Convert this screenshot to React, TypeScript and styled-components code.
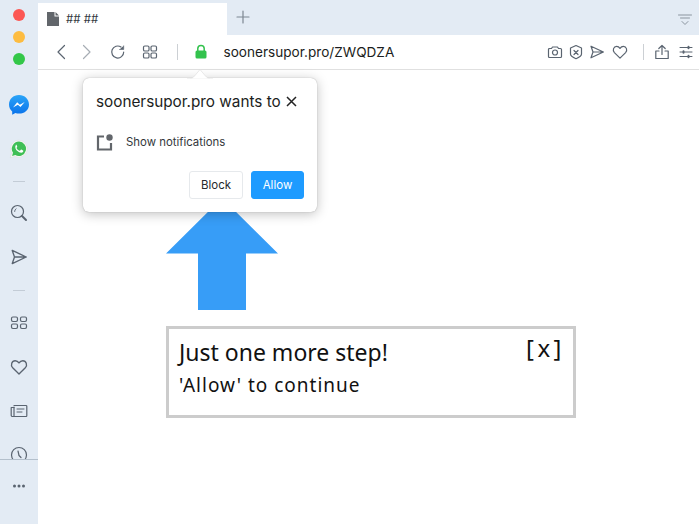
import styled, { createGlobalStyle } from 'styled-components'

const GlobalStyle = createGlobalStyle`
    html, body {
        margin: 0;
        padding: 0;
        background: #fff;
        font-family: Inter, "Liberation Sans", sans-serif;
    }
`

const Window = styled.div`
    position: relative;
    display: flex;
    width: 699px;
    height: 524px;
    overflow: hidden;
`

const Sidebar = styled.aside`
    position: relative;
    display: flex;
    flex-direction: column;
    align-items: center;
    flex: 0 0 38px;
    height: 524px;
    overflow: hidden;
    background: #e3ebf4;
`

const Lights = styled.div`
    display: flex;
    flex-direction: column;
    gap: 10px;
    padding-top: 9px;
    margin-bottom: 18px;
`

const Light = styled.span<{ $color: string }>`
    width: 12px;
    height: 12px;
    border-radius: 50%;
    background: ${p => p.$color};
`

const SideItem = styled.div<{ $height?: number }>`
    display: flex;
    align-items: center;
    justify-content: center;
    flex: 0 0 auto;
    width: 38px;
    height: ${p => p.$height ?? 44}px;
`

const SideRule = styled.span`
    display: block;
    width: 12px;
    height: 1px;
    background: #c3ccd6;
`

const SideFooter = styled.div`
    position: absolute;
    left: 0;
    right: 0;
    top: 459px;
    bottom: 0;
    display: flex;
    justify-content: center;
    padding-top: 19px;
    background: #e3ebf4;
    border-top: 1px solid #b4c0cc;
`

const Main = styled.div`
    display: flex;
    flex-direction: column;
    flex: 1;
    min-width: 0;
`

const TabStrip = styled.div`
    display: flex;
    align-items: flex-end;
    height: 35px;
    background: #e3ebf4;
`

const Tab = styled.div`
    display: flex;
    align-items: center;
    gap: 7px;
    box-sizing: border-box;
    width: 189px;
    height: 32px;
    padding-left: 9px;
    background: #fff;
    font-size: 11.5px;
    color: #333a42;
`

const NewTab = styled.div`
    display: flex;
    align-items: center;
    justify-content: center;
    align-self: flex-start;
    width: 32px;
    height: 34px;
`

const TabMenu = styled.div`
    display: flex;
    align-self: center;
    margin: 4px 7px 0 auto;
`

const Toolbar = styled.div`
    display: flex;
    align-items: center;
    box-sizing: border-box;
    height: 35px;
    padding: 0 6px 1px 17px;
    background: #fff;
    border-bottom: 1px solid #e0e0e0;
`

const ToolGroup = styled.div<{ $gap: number; $left?: number }>`
    display: flex;
    align-items: center;
    gap: ${p => p.$gap}px;
    margin-left: ${p => p.$left ?? 0}px;
`

const ToolDivider = styled.span<{ $margin: string }>`
    width: 1px;
    height: 16px;
    margin: ${p => p.$margin};
    background: #ccd0d4;
`

const Url = styled.span`
    margin-left: 16px;
    font-size: 13.6px;
    color: #1b1d20;
`

const ToolEnd = styled.div`
    display: flex;
    align-items: center;
    margin-left: auto;
`

const Page = styled.main`
    flex: 1;
    display: flex;
    flex-direction: column;
    padding: 128px 0 0 128px;
    background: #fff;
`

const Arrow = styled.svg`
    display: block;
    width: 112px;
    height: 112px;
    margin-bottom: 16px;
`

const Notice = styled.section`
    position: relative;
    box-sizing: border-box;
    width: 410px;
    height: 92px;
    padding: 8px 9px 0 10px;
    border: 3px solid #cccccc;
    font-family: "Noto Sans", sans-serif;
    color: #111;
`

const NoticeTitle = styled.h1`
    margin: 0;
    font-size: 23px;
    font-weight: 400;
    line-height: 30px;
`

const NoticeText = styled.p`
    margin: 5px 0 0;
    font-size: 19px;
    line-height: 26px;
    letter-spacing: 1px;
`

const NoticeClose = styled.span`
    position: absolute;
    top: 2px;
    right: 8px;
    font-size: 24px;
    line-height: 34px;
    letter-spacing: 3.5px;
`

const Popup = styled.div`
    position: absolute;
    left: 83px;
    top: 78px;
    box-sizing: border-box;
    width: 234px;
    height: 134px;
    padding: 0 13px;
    background: #fff;
    border-radius: 6px;
    box-shadow: 0 0 1px rgba(0, 0, 0, 0.35), 0 2px 12px rgba(0, 0, 0, 0.25);
`

const PopupNotch = styled.svg`
    position: absolute;
    left: 104px;
    top: -9px;
    width: 26px;
    height: 10px;
`

const PopupHead = styled.div`
    display: flex;
    align-items: center;
    justify-content: space-between;
    height: 46px;
    padding-top: 1px;
    box-sizing: border-box;
    padding-right: 7px;
`

const PopupTitle = styled.span`
    font-size: 15.3px;
    color: #1c1e21;
`

const Permission = styled.div`
    display: flex;
    align-items: center;
    gap: 13px;
    height: 36px;
    font-size: 11.4px;
    color: #33373b;
`

const PopupActions = styled.div`
    display: flex;
    justify-content: flex-end;
    gap: 8px;
    margin-top: 11px;
`

const PopupButton = styled.button<{ $primary?: boolean }>`
    box-sizing: border-box;
    width: ${p => (p.$primary ? 53 : 54)}px;
    height: 28px;
    padding: 0;
    border-radius: 3px;
    border: 1px solid ${p => (p.$primary ? '#1e9bff' : '#e6e9ec')};
    background: ${p => (p.$primary ? '#1e9bff' : '#fff')};
    color: ${p => (p.$primary ? '#fff' : '#26292c')};
    font-family: inherit;
    font-size: 11.5px;
`

const stroke = '#5a6470'

const Icon = ({ size = 18, width, color = stroke, sw = 1.2, children }: {
    size?: number
    width?: number
    color?: string
    sw?: number
    children: React.ReactNode
}) => (
    <svg
        width={width ?? size}
        height={size}
        viewBox={`0 0 ${width ?? size} ${size}`}
        fill="none"
        stroke={color}
        strokeWidth={sw}
        strokeLinecap="round"
        strokeLinejoin="round"
    >
        {children}
    </svg>
)

const Grid = () => (
    <Icon size={16}>
        <rect x="1.5" y="2" width="5.5" height="5" rx="1.3" />
        <rect x="9" y="2" width="5.5" height="5" rx="1.3" />
        <rect x="1.5" y="9" width="5.5" height="5" rx="1.3" />
        <rect x="9" y="9" width="5.5" height="5" rx="1.3" />
    </Icon>
)

const Heart = ({ size = 16 }: { size?: number }) => (
    <Icon size={size}>
        <g transform={`scale(${size / 16})`}>
            <path d="M8 14.200 2.400 8.600C.2 6.200 1.600 2.400 4.600 2.400c1.500 0 2.600.8 3.400 2 .8-1.200 1.900-2 3.400-2 3 0 4.400 3.800 2.200 6.200L8 14.200Z" />
        </g>
    </Icon>
)

const Send = ({ size = 16 }: { size?: number }) => (
    <Icon size={size}>
        <g transform={`scale(${size / 16})`}>
            <path d="M2 2.200 14.400 8 2 13.800 4 8 2 2.200ZM4 8h10.400" />
        </g>
    </Icon>
)

const Messenger = () => (
    <svg width="22" height="22" viewBox="0 0 22 22">
        <defs>
            <linearGradient id="msg" x1="0.5" y1="0" x2="0.5" y2="1">
                <stop offset="0" stopColor="#2aa4f8" />
                <stop offset="1" stopColor="#0a72ea" />
            </linearGradient>
        </defs>
        <path d="M11 1C5.300 1 1 5 1 10.400c0 2.900 1.200 5.300 3.200 7v3.400l3.200-1.800c1.100.4 2.300.6 3.600.6 5.700 0 10-4 10-9.200S16.700 1 11 1Z" fill="url(#msg)" />
        <path d="m5 13.400 4.200-5.100 2.600 2.500 4.900-2.700-4.200 5-2.600-2.400L5 13.400Z" fill="#fff" />
    </svg>
)

const Whatsapp = () => (
    <svg width="20" height="20" viewBox="0 0 20 20">
        <path d="M10 1.200a8.600 8.600 0 0 0-7.400 13L1.200 18.800l4.700-1.300A8.600 8.600 0 1 0 10 1.200Z" fill="#f4f6f4" stroke="#d8dcd8" strokeWidth="0.5" />
        <path d="M10 2.600a7.200 7.200 0 0 0-6 11.200l-.9 3.100 3.200-.8A7.200 7.200 0 1 0 10 2.600Z" fill="#3fbf55" />
        <path d="M7.600 5.800c-.4 0-1.300.7-1.300 2.100 0 1.600 1 3 1.900 3.900 1.200 1.200 2.800 2 4 2 1.200 0 2.100-.9 2.200-1.700 0-.4-.1-.6-.4-.7l-1.600-.8c-.3-.1-.5 0-.7.3l-.6.7c-.2.2-.4.2-.7.1-1.200-.5-2.200-1.400-2.800-2.500-.1-.3 0-.4.1-.6l.5-.6c.1-.2.1-.4 0-.6l-.7-1.700c-.1-.3-.3-.4-.5-.4h-.4Z" fill="#fff" />
    </svg>
)

export default function App() {
    return (
        <>
            <GlobalStyle />
            <Window>
                <Sidebar>
                    <Lights>
                        <Light $color="#fc5753" />
                        <Light $color="#fdbc40" />
                        <Light $color="#33c748" />
                    </Lights>
                    <SideItem><Messenger /></SideItem>
                    <SideItem><Whatsapp /></SideItem>
                    <SideItem $height={20}><SideRule /></SideItem>
                    <SideItem>
                        <Icon size={18}>
                            <circle cx="7.500" cy="7.500" r="6" />
                            <path d="M4.600 7.500a3 3 0 0 1 1.500-2.800" strokeWidth="0.9" />
                            <path d="m12 12 4 4" strokeWidth="2" />
                        </Icon>
                    </SideItem>
                    <SideItem><Send size={18} /></SideItem>
                    <SideItem $height={22}><SideRule /></SideItem>
                    <SideItem>
                        <Icon size={18}>
                            <rect x="1.500" y="3" width="6" height="4.500" rx="1.400" />
                            <rect x="10.500" y="3" width="6" height="4.500" rx="1.400" />
                            <rect x="1.500" y="10" width="6" height="4.500" rx="1.400" />
                            <rect x="10.500" y="10" width="6" height="4.500" rx="1.400" />
                        </Icon>
                    </SideItem>
                    <SideItem><Heart size={18} /></SideItem>
                    <SideItem>
                        <Icon size={18}>
                            <path d="M4 3.500h12a.8.8 0 0 1 .8.8v9.400a.8.8 0 0 1-.8.8H2.500a1.300 1.300 0 0 1-1.300-1.300V5.500H4" />
                            <path d="M4 5v9" />
                            <path d="M7 7h7M7 10h5" strokeWidth="1" />
                        </Icon>
                    </SideItem>
                    <SideItem>
                        <Icon size={18}>
                            <circle cx="9" cy="9" r="7.500" />
                            <path d="M8 5l1 4.500 2 2" />
                        </Icon>
                    </SideItem>
                    <SideFooter>
                        <svg width="14" height="14" viewBox="0 0 14 14" fill="#5a6470">
                            <circle cx="2.500" cy="7" r="1.500" />
                            <circle cx="7" cy="7" r="1.500" />
                            <circle cx="11.500" cy="7" r="1.500" />
                        </svg>
                    </SideFooter>
                </Sidebar>
                <Main>
                    <TabStrip>
                        <Tab>
                            <svg width="12" height="14" viewBox="0 0 12 14" fill="#62666b">
                                <path d="M0 0h7.500v4.500H12V14H0V0Zm8.500 0L12 3.500H8.500V0Z" />
                            </svg>
                            ## ##
                        </Tab>
                        <NewTab>
                            <Icon size={14} color="#7d8791">
                                <path d="M7 1v12M1 7h12" />
                            </Icon>
                        </NewTab>
                        <TabMenu>
                            <Icon size={14} width={14} color="#8b959f" sw={1}>
                                <path d="M0.500 2h13M2.500 5h9" />
                                <path d="m4 8.500 3 3 3-3" />
                            </Icon>
                        </TabMenu>
                    </TabStrip>
                    <Toolbar>
                        <ToolGroup $gap={6.5}>
                            <Icon size={16}>
                                <path d="M9.500 1.500 3 8l6.500 6.500" />
                            </Icon>
                            <Icon size={16} color="#a6adb4">
                                <path d="M5.500 1.500 12 8l-6.500 6.500" />
                            </Icon>
                        </ToolGroup>
                        <ToolGroup $gap={16} $left={16}>
                            <Icon size={16}>
                                <path d="M13.700 8A6 6 0 1 1 11 3" />
                                <path d="M9.500 5.500h4.200V1.800" fill={stroke} strokeWidth="0.6" />
                            </Icon>
                            <Grid />
                        </ToolGroup>
                        <ToolDivider $margin="0 16px 0 19px" />
                        <svg width="14" height="16" viewBox="0 0 14 16">
                            <path d="M3.800 7V4.600a3.200 3.200 0 0 1 6.400 0V7" fill="none" stroke="#33c24d" strokeWidth="1.500" />
                            <rect x="1.500" y="6.500" width="11" height="8" rx="1.500" fill="#33c24d" />
                        </svg>
                        <Url>soonersupor.pro/ZWQDZA</Url>
                        <ToolEnd>
                            <ToolGroup $gap={5}>
                                <Icon size={16}>
                                    <path d="M1.500 5.500a1 1 0 0 1 1-1h2l1-1.500h5l1 1.500h2a1 1 0 0 1 1 1v7a1 1 0 0 1-1 1h-11a1 1 0 0 1-1-1v-7Z" />
                                    <circle cx="8" cy="8.500" r="2.500" />
                                </Icon>
                                <Icon size={16}>
                                    <path d="M8 1.500 13.500 4v6c0 2-2.500 3.500-5.500 4.700C5 13.500 2.500 12 2.500 10V4L8 1.500Z" />
                                    <path d="m6 6.500 4 4M10 6.500l-4 4" />
                                </Icon>
                                <Send />
                                <ToolGroup $gap={0} $left={2}>
                                    <Heart />
                                </ToolGroup>
                            </ToolGroup>
                            <ToolDivider $margin="0 10px 0 15px" />
                            <ToolGroup $gap={9}>
                                <Icon size={16}>
                                    <path d="M8 10.500V1.500M4.800 4.500 8 1.500l3.200 3M5 7H1.800v7.500h12.400V7H11" />
                                </Icon>
                                <Icon size={14}>
                                    <path d="M1 2.500h12M1 7h12M1 11.500h12" strokeWidth="1" />
                                    <path d="M9.500 1.800v1.400M4.500 6.300v1.400M9.500 10.800v1.400" strokeWidth="2" />
                                </Icon>
                            </ToolGroup>
                        </ToolEnd>
                    </Toolbar>
                    <Page>
                        <Arrow viewBox="0 0 112 112">
                            <path d="M56 0 112 55.500H80V112H32V55.500H0L56 0Z" fill="#379df7" />
                        </Arrow>
                        <Notice>
                            <NoticeTitle>Just one more step!</NoticeTitle>
                            <NoticeText>'Allow' to continue</NoticeText>
                            <NoticeClose>[x]</NoticeClose>
                        </Notice>
                    </Page>
                </Main>
                <Popup>
                    <PopupNotch viewBox="0 0 26 10">
                        <path d="M0 10c4 0 6-1 8-3.500L13 .5l5 6c2 2.500 4 3.500 8 3.500Z" fill="#fff" stroke="#dcdcdc" strokeWidth="0.6" />
                        <path d="M0 10.400h26" stroke="#fff" strokeWidth="1.500" />
                    </PopupNotch>
                    <PopupHead>
                        <PopupTitle>soonersupor.pro wants to</PopupTitle>
                        <svg width="11" height="11" viewBox="0 0 11 11" stroke="#222" strokeWidth="1.500">
                            <path d="m1 1 9 9M10 1 1 10" />
                        </svg>
                    </PopupHead>
                    <Permission>
                        <svg width="17" height="17" viewBox="0 0 17 17" fill="none">
                            <path d="M8 2.500H2V15.500H15V9" stroke="#62666b" strokeWidth="2.200" />
                            <circle cx="13.500" cy="3.500" r="3.200" fill="#62666b" />
                        </svg>
                        Show notifications
                    </Permission>
                    <PopupActions>
                        <PopupButton>Block</PopupButton>
                        <PopupButton $primary>Allow</PopupButton>
                    </PopupActions>
                </Popup>
            </Window>
        </>
    )
}
